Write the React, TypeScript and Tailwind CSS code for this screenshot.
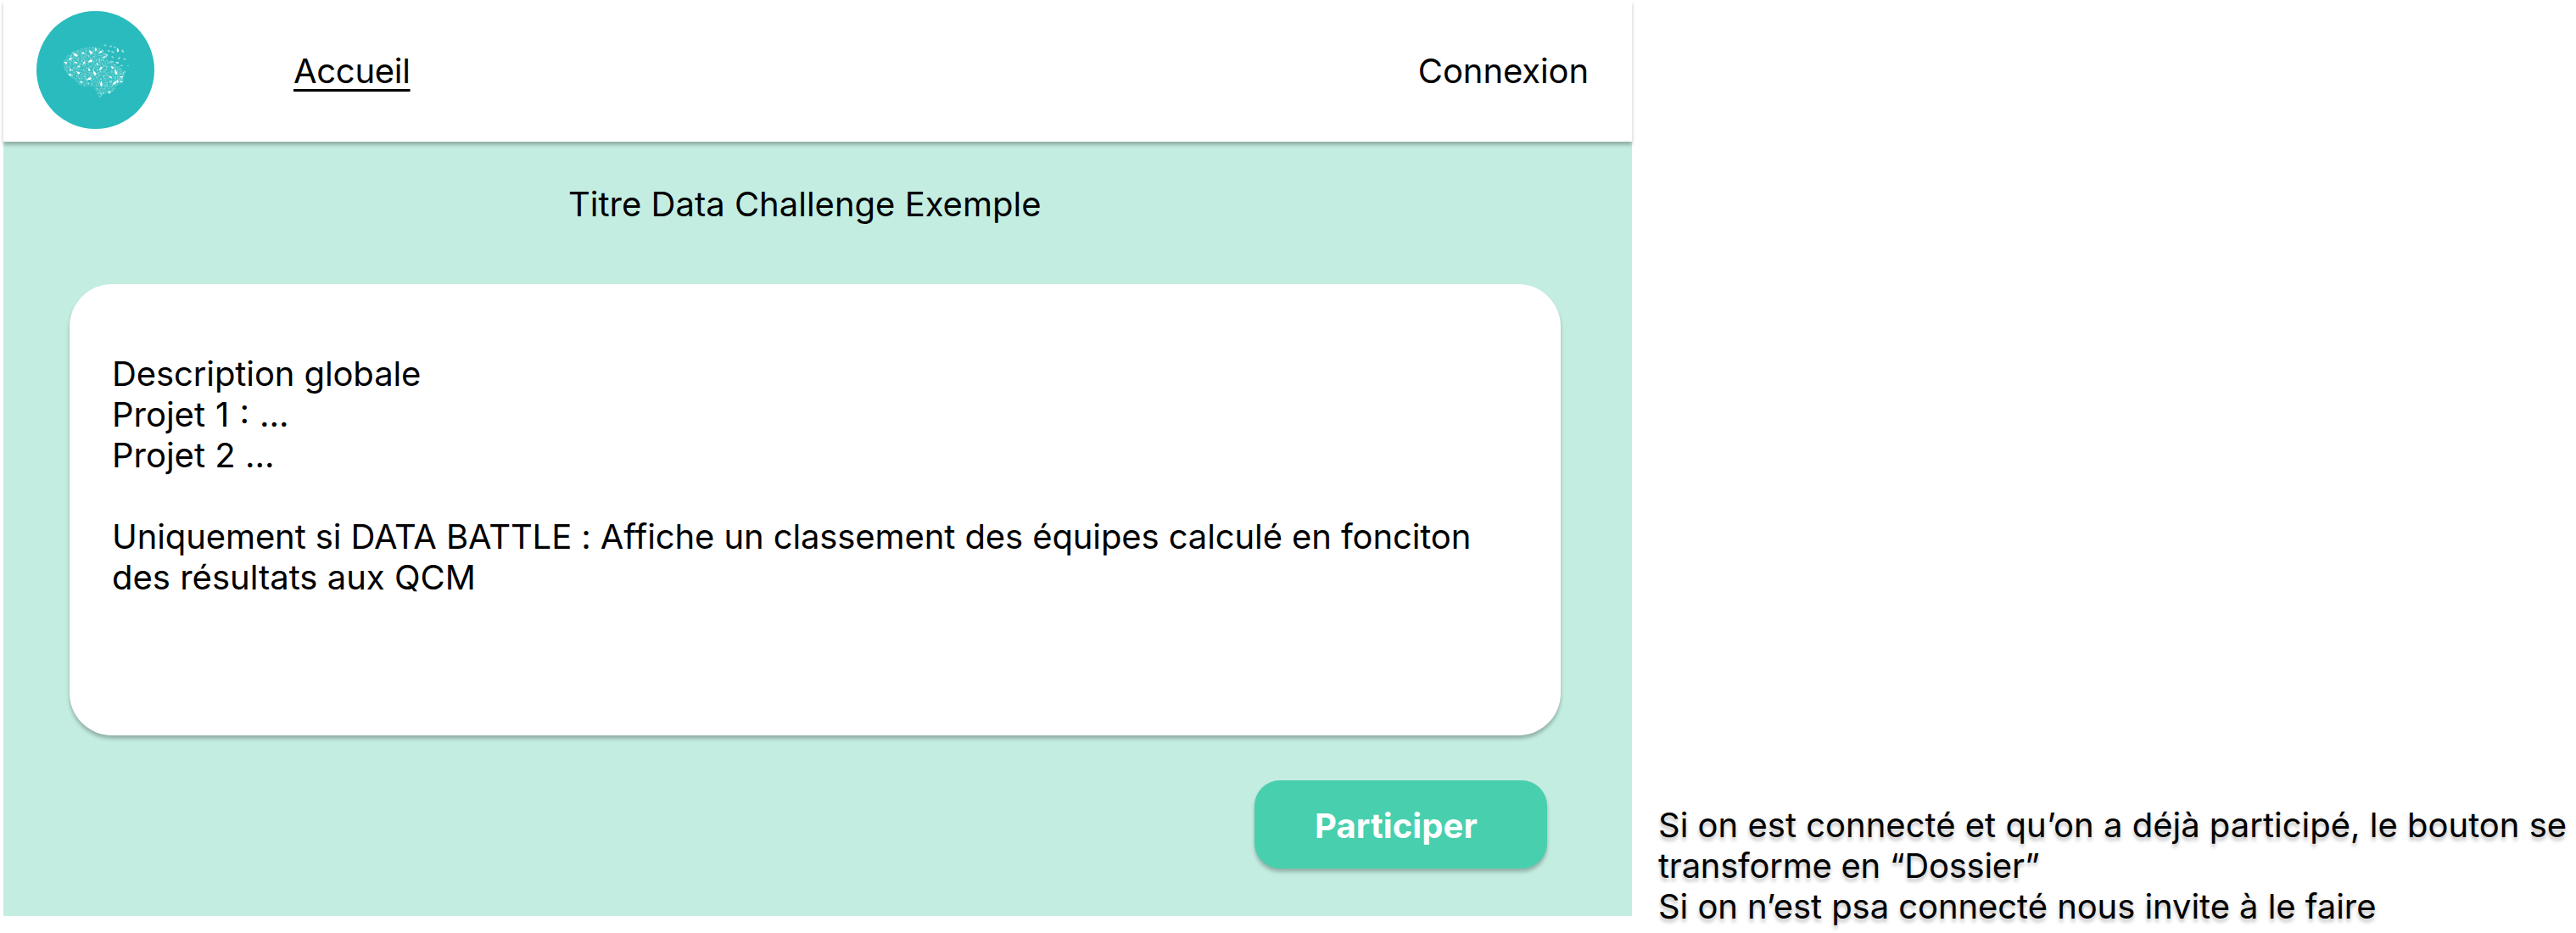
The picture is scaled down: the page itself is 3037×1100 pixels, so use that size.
import React from "react";

const BRAIN =
  "M222 222 L234 200 L258 183 L290 171 L330 165 L358 171 L374 184 L384 196 L376 210 L398 222 L428 236 L442 258 L437 292 L416 300 L405 318 L388 332 L364 333 L352 349 L341 327 L328 305 L298 306 L280 301 L262 281 L240 266 L226 242 Z";

// x, y, half-length, half-width, angle
const BRIGHT: [number, number, number, number, number][] = [
  [266, 194, 9, 4.5, 25], [248, 209, 6, 4, -50], [231, 222, 7, 3, 0], [267, 221, 7, 2.5, 10],
  [278, 235, 5, 2.5, 0], [297, 223, 7, 3.5, -70], [293, 188, 6, 3, 10], [320, 184, 8, 4.5, 40],
  [338, 174, 6, 3.5, 70], [355, 185, 6, 3.5, -50], [319, 217, 8, 5, -35], [344, 226, 5, 3, 60],
  [315, 246, 6, 3.5, 60], [334, 258, 9, 4.5, 55], [356, 243, 8, 4, -60], [276, 257, 7, 3.5, 25],
  [249, 246, 5, 2.5, 40], [247, 264, 6, 3.5, 35], [315, 279, 8, 4.5, -30], [286, 291, 5, 3, 0],
  [358, 296, 9, 4.5, 80], [386, 326, 5, 3, 10], [405, 295, 8, 5, -55], [415, 287, 6, 4, 60],
  [428, 289, 6, 3, 0], [428, 272, 7, 3, 0], [391, 273, 5, 3, 20], [409, 254, 10, 4, 62],
  [397, 238, 6, 3.5, 40], [414, 222, 6, 2.5, 0], [416, 177, 7, 4, 70], [367, 203, 6, 2.5, -40],
];

const FAINT: [number, number, number, number, number][] = [
  [372, 160, 5, 3, 20], [392, 164, 5, 3, -30], [406, 167, 5, 2.5, 30], [434, 181, 6, 4, 60],
  [385, 180, 5, 3, 20], [399, 184, 6, 3, 20], [421, 206, 6, 3, -40], [441, 209, 5, 3, 10],
  [430, 232, 6, 2.5, 0], [453, 232, 3, 2, 0], [396, 218, 7, 3, 10], [398, 202, 5, 3, 40],
  [377, 197, 7, 3, -45], [441, 254, 3, 4, 0],
];

const noise = (n: number) => {
  const v = Math.sin(n * 127.1 + 311.7) * 43758.5453;
  return v - Math.floor(v);
};

const SPECKS = Array.from({ length: 34 * 27 }, (_, i) => ({
  x: 222 + (i % 34) * 6.8 + noise(i) * 5,
  y: 165 + Math.floor(i / 34) * 6.9 + noise(i + 2000) * 5,
  rx: 2.2 + noise(i + 4000) * 2.4,
  ry: 1.2 + noise(i + 6000) * 1.2,
  angle: noise(i + 8000) * 180,
  opacity: 0.16 + noise(i + 9500) * 0.34,
}));

function Logo() {
  return (
    <svg viewBox="129 39 417 417" className="size-[139px] shrink-0" role="img" aria-label="Logo">
      <defs>
        <clipPath id="brain">
          <path d={BRAIN} />
        </clipPath>
      </defs>
      <circle cx="337.5" cy="247.5" r="208.5" fill="#2abbbe" />
      <g clipPath="url(#brain)" fill="#fff">
        <path d={BRAIN} opacity="0.06" />
        {SPECKS.map((s, i) => (
          <ellipse key={i} cx={s.x} cy={s.y} rx={s.rx} ry={s.ry} opacity={s.opacity} transform={`rotate(${s.angle} ${s.x} ${s.y})`} />
        ))}
      </g>
      <g fill="#fff" opacity="0.45">
        {FAINT.map(([x, y, a, b, r]) => (
          <ellipse key={`${x}-${y}`} cx={x} cy={y} rx={a} ry={b} transform={`rotate(${r} ${x} ${y})`} />
        ))}
      </g>
      <g fill="#fff">
        {BRIGHT.map(([x, y, a, b, r]) => (
          <path
            key={`${x}-${y}`}
            d={`M${-a} ${-b * 0.4} C${-a * 0.3} ${-b} ${a} ${-b * 1.3} ${a} ${b * 0.2} C${a} ${b * 1.4} 0 ${b * 1.2} ${-a} ${-b * 0.4} Z`}
            transform={`translate(${x} ${y}) rotate(${r})`}
          />
        ))}
      </g>
    </svg>
  );
}

export default function App() {
  return (
    <div className="flex h-[1100px] w-[3037px] items-start overflow-hidden bg-white pl-1 font-['Inter',sans-serif] text-[40px] leading-[48px] text-black">
      <div className="flex h-[1080px] w-[1920px] shrink-0 flex-col bg-[#c4ede2]">
        <header className="flex h-[167px] shrink-0 items-start bg-white pl-[39px] pr-[51px] shadow-[0_4px_4px_rgba(0,0,0,0.25)]">
          <div className="pt-[13px]">
            <Logo />
          </div>
          <nav className="flex flex-1 justify-between pl-[164px] pt-[60px]">
            <a className="tracking-[-0.3px] underline decoration-[2.7px] underline-offset-[7px]">Accueil</a>
            <a className="tracking-[-0.1px]">Connexion</a>
          </nav>
        </header>
        <main className="flex flex-col">
          <h1 className="ml-[666px] mt-[50px] whitespace-nowrap">Titre Data Challenge Exemple</h1>
          <section className="ml-[78px] mt-[70px] h-[532px] w-[1758px] rounded-[50px] bg-white pl-[50px] pt-[82px] shadow-[0_4px_4px_rgba(0,0,0,0.25)]">
            <p className="whitespace-nowrap tracking-[-0.1px]">Description globale</p>
            <p className="whitespace-nowrap [word-spacing:0.8px]">Projet 1 : ...</p>
            <p className="whitespace-nowrap">Projet 2 ...</p>
            <p className="mt-12 whitespace-nowrap">
              <span className="tracking-[-0.1px]">
                Uniquement si DATA BATTLE : Affiche un classement des équipes calculé en fonciton
              </span>
              <br />
              des résultats aux QCM
            </p>
          </section>
          <button className="ml-[1475px] mt-[53px] flex h-[104px] w-[345px] items-start rounded-[30px] bg-[#48cfae] pl-[71px] pt-[30px] font-bold tracking-[0.1px] text-white shadow-[0_4px_4px_rgba(0,0,0,0.25)]">
            Participer
          </button>
        </main>
      </div>
      <aside className="ml-[31px] mt-[949px] whitespace-nowrap [text-shadow:0_4px_4px_rgba(0,0,0,0.25)]">
        Si on est connecté et qu’on a déjà participé, le bouton se
        <br />
        <span className="tracking-[-0.25px]">transforme en “Dossier”</span>
        <br />
        <span className="tracking-[-0.07px]">Si on n’est psa connecté nous invite à le faire</span>
      </aside>
    </div>
  );
}
